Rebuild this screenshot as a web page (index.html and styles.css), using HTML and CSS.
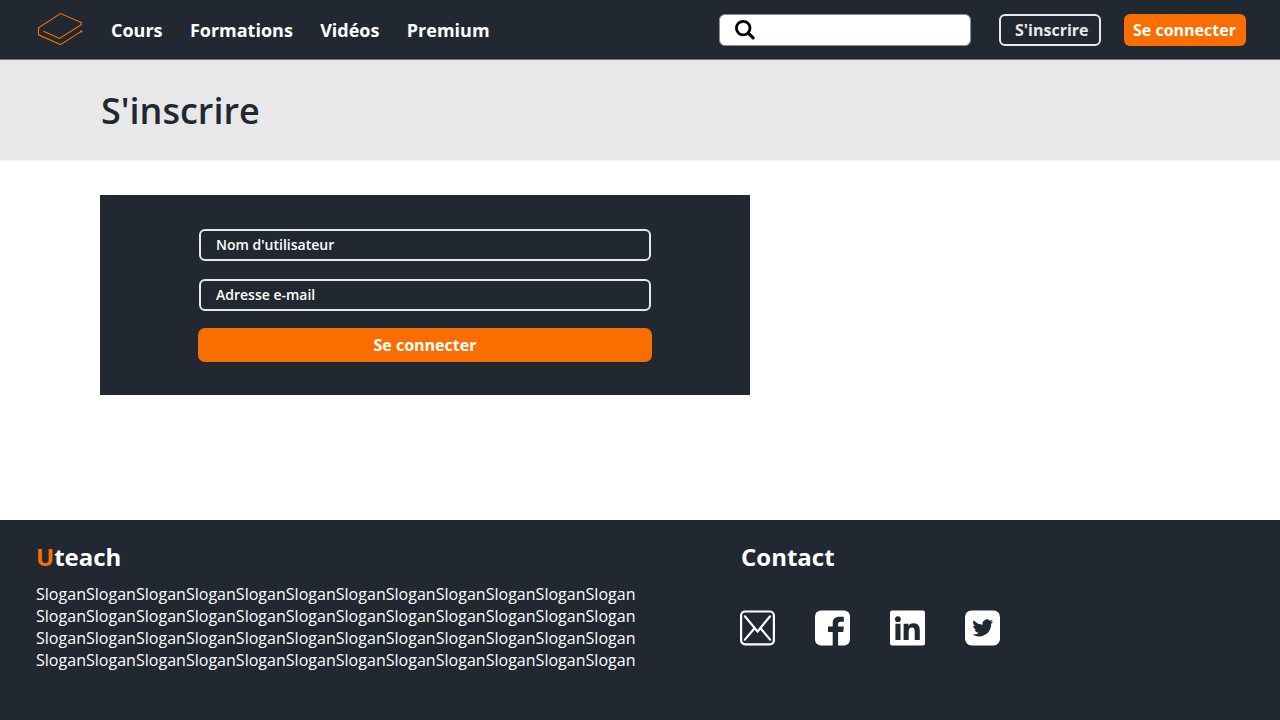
FILE: index.html
```html
<!DOCTYPE html>
<html lang="fr">
<head>
<meta charset="utf-8">
<title>Uteach - S'inscrire</title>
<link rel="stylesheet" href="styles.css">
</head>
<body>
<header class="topbar">
  <svg class="logo" width="46" height="34" viewBox="37 12 46 34" fill="none" stroke="#fa6e00" stroke-width="1.1"><path d="M43.5 31.2 59.5 38.5 81.3 24.6V22.6L60.5 13.6 38.5 27.7V34.8L60.5 44.6 81.3 31.4"/><circle cx="81.3" cy="31.4" r=".6"/></svg>
  <nav class="nav"><a>Cours</a><a>Formations</a><a>Vidéos</a><a>Premium</a></nav>
  <div class="search">
    <svg width="22" height="22" viewBox="0 0 22 22" fill="none" stroke="#000"><circle cx="9.2" cy="9.1" r="6.8" stroke-width="2.8"/><path d="M14.2 14.1 19.1 18.8" stroke-width="3.2" stroke-linecap="round"/></svg>
  </div>
  <a class="btn btn-outline">S'inscrire</a>
  <a class="btn btn-solid">Se connecter</a>
</header>
<section class="banner"><h1>S'inscrire</h1></section>
<main class="main">
  <form class="card">
    <div class="field">Nom d'utilisateur</div>
    <div class="field">Adresse e-mail</div>
    <div class="submit">Se connecter</div>
  </form>
</main>
<footer class="footer">
  <div class="about">
    <h2><span class="accent">U</span>teach</h2>
    <p class="slogan">SloganSloganSloganSloganSloganSloganSloganSloganSloganSloganSloganSlogan<br>SloganSloganSloganSloganSloganSloganSloganSloganSloganSloganSloganSlogan<br>SloganSloganSloganSloganSloganSloganSloganSloganSloganSloganSloganSlogan<br>SloganSloganSloganSloganSloganSloganSloganSloganSloganSloganSloganSlogan</p>
  </div>
  <div class="contact">
    <h2>Contact</h2>
    <div class="social">
      <svg width="35" height="36" viewBox="0 0 35 36" fill="none" stroke="#fff" stroke-width="2.2"><rect x="1.1" y="1.5" width="32.8" height="32.8" rx="4"/><path d="M4.9 6.3 17.5 21.5 30.1 6.3M4.9 29.600 14.300 18.500M30.100 29.600 20.700 18.500" stroke-linecap="round"/></svg>
      <svg width="35" height="36" viewBox="0 0 35 36"><rect y=".4" width="35" height="35" rx="6" fill="#fff"/><path d="M17.700 36V22H13v-5.600h4.700v-3.400c0-4.200 2.500-6.300 6.500-6.300h4.600v5h-3c-2 0-2.700.8-2.700 2.400v2.300h5.700l-.5 5.600h-5.200v14z" fill="#222831"/></svg>
      <svg width="35" height="36" viewBox="0 0 35 36"><rect y=".4" width="35" height="35" rx="2" fill="#fff"/><g fill="#222831"><circle cx="7.900" cy="9.200" r="2.900"/><path d="M5.400 13.700h5.100V30H5.400zM13.600 13.700h4.900v2.200c.9-1.600 2.600-2.600 4.900-2.600 5.100 0 6.400 3.200 6.400 7.700v9h-5.100v-8c0-2.200-.2-4.400-2.800-4.400s-3.200 2-3.200 4.300V30h-5.100z"/></g></svg>
      <svg width="35" height="36" viewBox="0 0 35 36"><rect y=".4" width="35" height="35" rx="6.500" fill="#fff"/><path transform="translate(7.400 7.500) scale(.87)" d="M23.950 4.570a10 10 0 0 1-2.820.770 4.960 4.960 0 0 0 2.160-2.720c-.95.550-2 .96-3.130 1.180a4.920 4.920 0 0 0-8.380 4.480C7.690 8.090 4.070 6.130 1.640 3.160a4.930 4.930 0 0 0 1.520 6.570 4.900 4.900 0 0 1-2.230-.61v.06a4.920 4.920 0 0 0 3.950 4.830 5 5 0 0 1-2.220.08 4.940 4.940 0 0 0 4.600 3.420A9.870 9.870 0 0 1 0 19.540a13.990 13.990 0 0 0 7.550 2.210c9.140 0 14.300-7.720 14-14.640.96-.69 1.800-1.560 2.400-2.540z" fill="#222831"/></svg>
    </div>
  </div>
</footer>
</body>
</html>
```
FILE: styles.css
```css
* { box-sizing: border-box; }
body { margin: 0; min-height: 720px; display: flex; flex-direction: column; background: #fff; font-family: "Open Sans", sans-serif; }
h1, h2, p { margin: 0; }
.topbar { height: 60px; display: flex; align-items: flex-start; background: #222831; border-bottom: 1px solid #77797e; }
.logo { flex: none; margin: 12px 0 0 37px; }
.nav { display: flex; gap: 27.3px; margin: 18px 0 0 28px; color: #fff; font-size: 18px; font-weight: 700; line-height: 25px; }
.search { width: 252px; height: 32px; margin: 14px 28px 0 auto; padding: 4px 14px; border: 1px solid #8b8e93; border-radius: 6px; background: #fff; }
.search svg { display: block; }
.btn { height: 32px; border-radius: 6px; font-size: 16px; font-weight: 700; line-height: 32px; margin-top: 14px; }
.btn-outline { width: 102px; border: 2px solid #e8e8e8; padding-left: 14px; line-height: 28px; color: #e8e8e8; margin-right: 23px; }
.btn-solid { width: 122px; margin-right: 34px; padding-left: 9px; background: #fa6e00; color: #fff; }
.banner { height: 101px; padding: 25px 0 0 101px; background: #e8e8e8; border-bottom: 1px solid #f3f3f3; }
.banner h1 { color: #222831; font-size: 36px; font-weight: 600; line-height: 52px; }
.main { flex: 1; padding: 34px 0 0 100px; }
.card { width: 650px; height: 200px; padding: 34px 98px 0; background: #222831; color: #fff; }
.field { height: 32px; margin: 0 1px 18px; padding-left: 15px; border: 2px solid #e8e8e8; border-radius: 6px; font-size: 14px; font-weight: 600; line-height: 28px; }
.submit { height: 34px; margin-top: -1px; border-radius: 7px; background: #fa6e00; font-size: 16px; font-weight: 700; line-height: 34px; text-align: center; }
.footer { height: 200px; display: flex; padding: 20px 36px 0; background: #222831; color: #fff; }
.footer h2 { font-size: 24px; font-weight: 700; line-height: 33px; }
.accent { color: #fa6e00; }
.about { width: 704px; }
.slogan { margin-top: 10px; font-size: 16px; line-height: 22px; letter-spacing: .022px; }
.contact h2 { padding-left: 1px; }
.social { display: flex; gap: 40px; margin-top: 37px; }
```
